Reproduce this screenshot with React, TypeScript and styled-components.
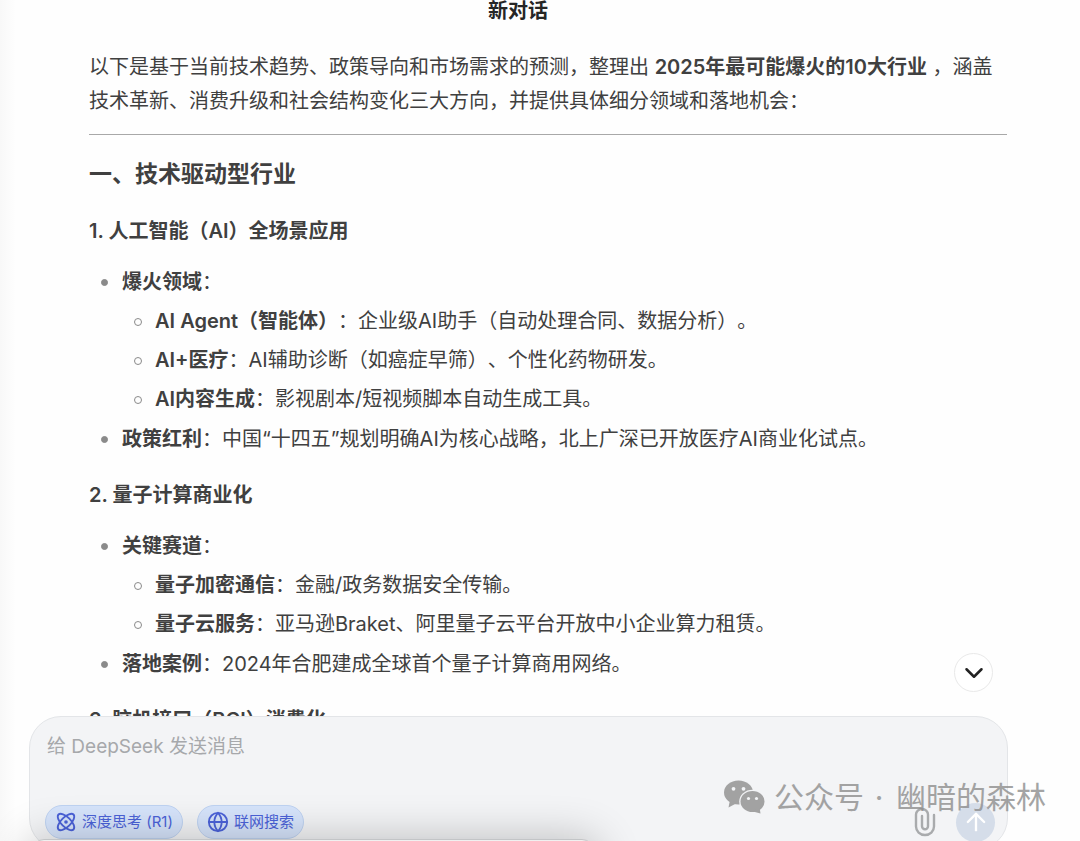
import React from 'react';
import styled, { createGlobalStyle } from 'styled-components';
import { ArrowUp, Atom, ChevronDown, Globe } from 'lucide-react';

const GlobalStyle = createGlobalStyle`
  *, *::before, *::after { box-sizing: border-box; }
  body {
    margin: 0;
    background: #fefefe;
    color: #404040;
    font-family: Inter, "Noto Sans CJK SC", sans-serif;
    font-size: 20px;
    line-height: 34px;
    text-spacing-trim: space-all;
  }
  button, textarea { font-family: inherit; }
`;

const Page = styled.div`
  position: relative;
  display: flex;
  flex-direction: column;
  height: 100vh;
  overflow: hidden;
  background: linear-gradient(to right, #f8f8f8, #fefefe 16px);
`;

const Header = styled.header`
  flex: none;
  height: 28px;
  padding-right: 44px;
  text-align: center;
`;

const Title = styled.h1`
  margin: 0;
  color: #262626;
  font-size: 20px;
  font-weight: 600;
  line-height: 22px;
`;

const Conversation = styled.main`
  position: relative;
  flex: 1;
  min-height: 0;
  display: flex;
  flex-direction: column;
`;

const Answer = styled.article`
  flex: 1;
  min-height: 0;
  overflow: hidden;
  padding: 22px 73px 0 89px;
`;

const Paragraph = styled.p`
  margin: 0;
`;

const Strong = styled.strong`
  font-weight: 600;
`;

const Divider = styled.hr`
  height: 1px;
  margin: 16px 0 22px;
  border: 0;
  background: #a8a8a8;
`;

const SectionTitle = styled.h2`
  margin: 0 0 23px;
  font-size: 23px;
  font-weight: 600;
  line-height: 34px;
`;

const TopicTitle = styled.h3`
  margin: 0 0 17px;
  font-size: 20px;
  font-weight: 600;
  line-height: 34px;
`;

const List = styled.ul<{ $nested?: boolean }>`
  display: flex;
  flex-direction: column;
  gap: 5px;
  margin: ${(p) => (p.$nested ? '5px 0 1px' : '0 0 22px')};
  padding: 0;
  list-style: none;
`;

const Item = styled.li<{ $ring?: boolean }>`
  display: grid;
  grid-template-columns: 31px 1fr;
  column-gap: 2px;

  &::before {
    content: '';
    justify-self: center;
    width: ${(p) => (p.$ring ? '8px' : '7px')};
    height: ${(p) => (p.$ring ? '8px' : '7px')};
    margin-top: 14px;
    border: 1px solid #8a8a8a;
    border-radius: 50%;
    background: ${(p) => (p.$ring ? 'transparent' : '#8a8a8a')};
  }
`;

const ScrollButton = styled.button`
  position: absolute;
  right: 87px;
  bottom: 24px;
  display: flex;
  align-items: center;
  justify-content: center;
  width: 39px;
  height: 39px;
  padding: 0;
  border: 1px solid #e9e9e9;
  border-radius: 50%;
  background: #fff;
  color: #222;
`;

const Composer = styled.form`
  flex: none;
  display: flex;
  flex-direction: column;
  margin: 0 72px -9px 29px;
  padding: 13px 12px 10px 15px;
  border: 1px solid #e3e5e8;
  border-radius: 32px;
  background: #f3f4f6;
`;

const Prompt = styled.textarea`
  height: 75px;
  padding: 0 2px;
  border: 0;
  outline: 0;
  resize: none;
  background: transparent;
  color: #404040;
  font-size: 19px;
  line-height: 34px;

  &::placeholder { color: #a6a8ab; opacity: 1; }
`;

const Toolbar = styled.div`
  display: flex;
  align-items: center;
  gap: 14px;
  height: 34px;
`;

const Chip = styled.button`
  display: flex;
  align-items: center;
  gap: 5px;
  height: 34px;
  padding: 0 9px;
  border: 1px solid #bfd3f2;
  border-radius: 17px;
  background: #d6e4fb;
  color: #4b62d8;
  font-size: 15px;
  line-height: 20px;
`;

const Actions = styled.div`
  display: flex;
  align-items: center;
  gap: 20px;
  margin-left: auto;
`;

const AttachButton = styled.button`
  display: flex;
  padding: 0;
  border: 0;
  background: transparent;
  color: #a9abad;
`;

const SendButton = styled.button`
  display: flex;
  align-items: center;
  justify-content: center;
  width: 39px;
  height: 39px;
  padding: 0;
  border: 0;
  border-radius: 50%;
  background: #d5dde9;
  color: #fff;
`;

const FrontWindow = styled.div`
  position: absolute;
  right: 45%;
  bottom: -58px;
  left: 32px;
  height: 60px;
  border: 1px solid #c3c5c7;
  border-radius: 12px;
  background: #f0f0f0;
  box-shadow: 0 4px 44px 4px rgba(0, 0, 0, 0.24);
  pointer-events: none;
`;

const Watermark = styled.div`
  position: absolute;
  right: 34px;
  bottom: 22px;
  display: flex;
  align-items: center;
  gap: 9px;
  color: #8e8e8e;
  font-size: 30px;
  line-height: 44px;
  opacity: 0.8;
  pointer-events: none;
`;

const WatermarkDot = styled.span`
  width: 12px;
  margin-right: 2px;
  text-align: center;
`;

interface Point {
  label: string;
  text?: string;
  children?: Point[];
}

interface Topic {
  title: string;
  points: Point[];
}

const topics: Topic[] = [
  {
    title: '1. 人工智能（AI）全场景应用',
    points: [
      {
        label: '爆火领域',
        children: [
          { label: 'AI Agent（智能体）', text: '企业级AI助手（自动处理合同、数据分析）。' },
          { label: 'AI+医疗', text: 'AI辅助诊断（如癌症早筛）、个性化药物研发。' },
          { label: 'AI内容生成', text: '影视剧本/短视频脚本自动生成工具。' },
        ],
      },
      { label: '政策红利', text: '中国“十四五”规划明确AI为核心战略，北上广深已开放医疗AI商业化试点。' },
    ],
  },
  {
    title: '2. 量子计算商业化',
    points: [
      {
        label: '关键赛道',
        children: [
          { label: '量子加密通信', text: '金融/政务数据安全传输。' },
          { label: '量子云服务', text: '亚马逊Braket、阿里量子云平台开放中小企业算力租赁。' },
        ],
      },
      { label: '落地案例', text: '2024年合肥建成全球首个量子计算商用网络。' },
    ],
  },
  { title: '3. 脑机接口（BCI）消费化', points: [] },
];

function Points({ points, nested = false }: { points: Point[]; nested?: boolean }) {
  return (
    <List $nested={nested}>
      {points.map((point) => (
        <Item key={point.label} $ring={nested}>
          <div>
            <Strong>{point.label}</Strong>：{point.text}
            {point.children && <Points points={point.children} nested />}
          </div>
        </Item>
      ))}
    </List>
  );
}

function ClipIcon() {
  return (
    <svg width="22" height="30" viewBox="0 0 22 30" fill="none" stroke="currentColor" strokeWidth="2.4" strokeLinecap="round">
      <path d="M20 8v11.500a9 8.500 0 0 1-18 0V7.500a6 5.500 0 0 1 12 0v11.800a3 3 0 0 1-6 0V9" />
    </svg>
  );
}

function WeChatIcon() {
  return (
    <svg width="41" height="34" viewBox="0 0 41 34">
      <g fill="currentColor">
        <ellipse cx="14.500" cy="12.500" rx="14.500" ry="12" />
        <path d="M6 20 4.500 27.500 13 23Z" />
      </g>
      <ellipse cx="28.500" cy="21.500" rx="13.300" ry="11.800" fill="#f3f4f6" />
      <g fill="currentColor">
        <ellipse cx="28.500" cy="21.500" rx="12" ry="10.500" />
        <path d="M29 31.500 36.500 33.500 35.500 27Z" />
      </g>
      <g fill="#f3f4f6">
        <circle cx="9.500" cy="8.800" r="1.900" />
        <circle cx="19.500" cy="8.800" r="1.900" />
        <circle cx="24.500" cy="18.500" r="1.600" />
        <circle cx="32.500" cy="18.500" r="1.600" />
      </g>
    </svg>
  );
}

export default function App() {
  return (
    <>
      <GlobalStyle />
      <Page>
        <Header>
          <Title>新对话</Title>
        </Header>
        <Conversation>
          <Answer>
            <Paragraph>
              以下是基于当前技术趋势、政策导向和市场需求的预测，整理出 <Strong>2025年最可能爆火的10大行业</Strong> ，涵盖技术革新、消费升级和社会结构变化三大方向，并提供具体细分领域和落地机会：
            </Paragraph>
            <Divider />
            <SectionTitle>一、技术驱动型行业</SectionTitle>
            {topics.map((topic) => (
              <section key={topic.title}>
                <TopicTitle>{topic.title}</TopicTitle>
                {topic.points.length > 0 && <Points points={topic.points} />}
              </section>
            ))}
          </Answer>
          <ScrollButton type="button" aria-label="滚动到底部">
            <ChevronDown size={30} strokeWidth={2} />
          </ScrollButton>
        </Conversation>
        <Composer>
          <Prompt aria-label="消息" placeholder="给 DeepSeek 发送消息" />
          <Toolbar>
            <Chip type="button">
              <Atom size={22} strokeWidth={2} />
              深度思考 (R1)
            </Chip>
            <Chip type="button">
              <Globe size={22} strokeWidth={2} />
              联网搜索
            </Chip>
            <Actions>
              <AttachButton type="button" aria-label="添加附件">
                <ClipIcon />
              </AttachButton>
              <SendButton type="button" aria-label="发送">
                <ArrowUp size={28} strokeWidth={2} />
              </SendButton>
            </Actions>
          </Toolbar>
        </Composer>
        <FrontWindow />
        <Watermark>
          <WeChatIcon />
          <span>公众号</span>
          <WatermarkDot>·</WatermarkDot>
          <span>幽暗的森林</span>
        </Watermark>
      </Page>
    </>
  );
}
